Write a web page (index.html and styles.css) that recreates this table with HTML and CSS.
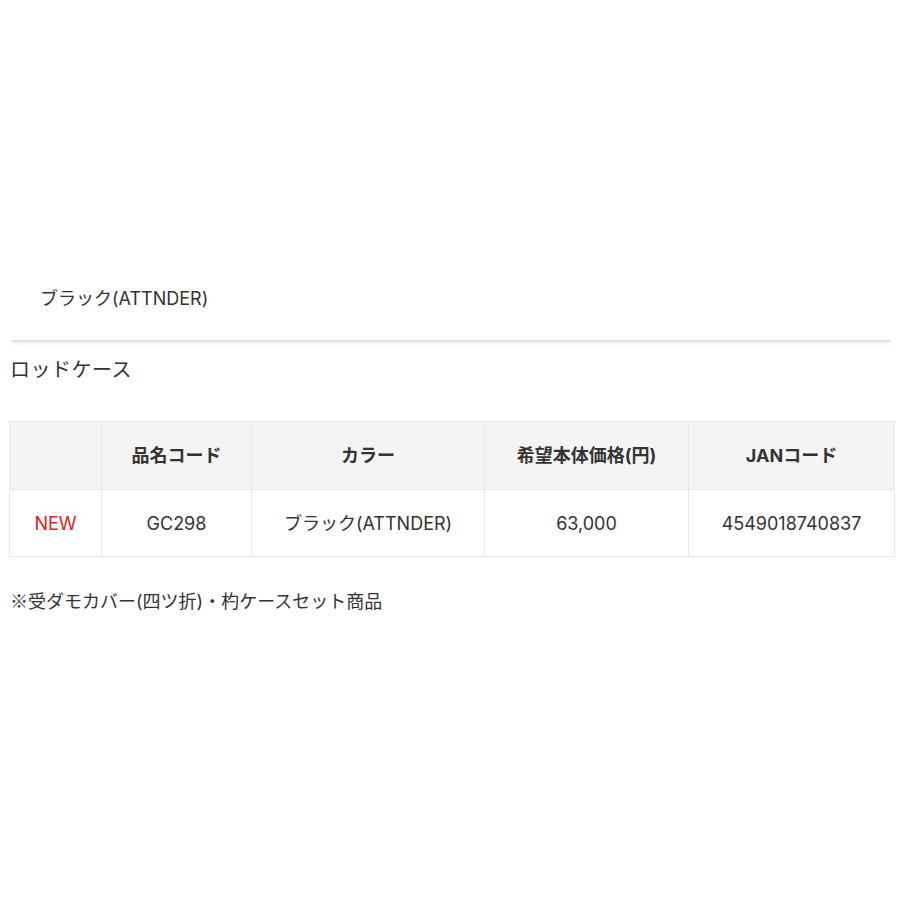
FILE: index.html
```html
<!DOCTYPE html>
<html lang="ja">
<head>
  <meta charset="UTF-8">
  <meta name="viewport" content="width=device-width, initial-scale=1.0">
  <title>ロッドケース</title>
  <link rel="stylesheet" href="styles.css">
</head>
<body>
  <div class="color-box">
    <p class="color-name">ブラック(ATTNDER)</p>
  </div>
  <div class="divider"></div>

  <h3 class="item-title">ロッドケース</h3>

  <table class="spec-table">
    <tr>
      <th class="col-new"></th>
      <th class="col-code">品名コード</th>
      <th class="col-color">カラー</th>
      <th class="col-price">希望本体価格(円)</th>
      <th class="col-jan">JANコード</th>
    </tr>
    <tr>
      <td class="new">NEW</td>
      <td>GC298</td>
      <td>ブラック(ATTNDER)</td>
      <td>63,000</td>
      <td>4549018740837</td>
    </tr>
  </table>

  <p class="note"><span class="mark">※</span>受ダモカバー(四ツ折)・杓ケースセット商品</p>
</body>
</html>
```
FILE: styles.css
```css
* {
  margin: 0;
  padding: 0;
  box-sizing: border-box;
}

body {
  background: #fff;
  color: #333;
  font-family: Inter, "Noto Sans CJK JP", sans-serif;
  font-size: 18px;
}

.color-box {
  padding: 285px 0 28px 40px;
}

.color-name {
  line-height: 27px;
}

.divider {
  height: 2px;
  margin: 0 10px 0 12px;
  background: #e2e2e2;
  box-shadow: 0 2px 4px rgba(0, 0, 0, 0.1);
}

.item-title {
  margin: 13px 0 0 10px;
  font-size: 20px;
  font-weight: normal;
  line-height: 30px;
  letter-spacing: 0.5px;
}

.spec-table {
  margin: 36px 0 0 9px;
  width: 885px;
  border-collapse: collapse;
  table-layout: fixed;
}

.spec-table th,
.spec-table td {
  border: 1px solid #e9e9e9;
  text-align: center;
  line-height: 27px;
}

.spec-table th {
  height: 68px;
  background: #f4f4f4;
  font-weight: bold;
}

.spec-table td {
  height: 67px;
}

.col-new { width: 92px; }
.col-code { width: 150px; }
.col-color { width: 233px; }
.col-price { width: 204px; }
.col-jan { width: 206px; }

.spec-table .new {
  color: #e0201c;
}

.note {
  margin: 30px 0 0 10px;
  line-height: 27px;
}

.mark {
  font-family: "Noto Sans CJK JP", sans-serif;
}
```
